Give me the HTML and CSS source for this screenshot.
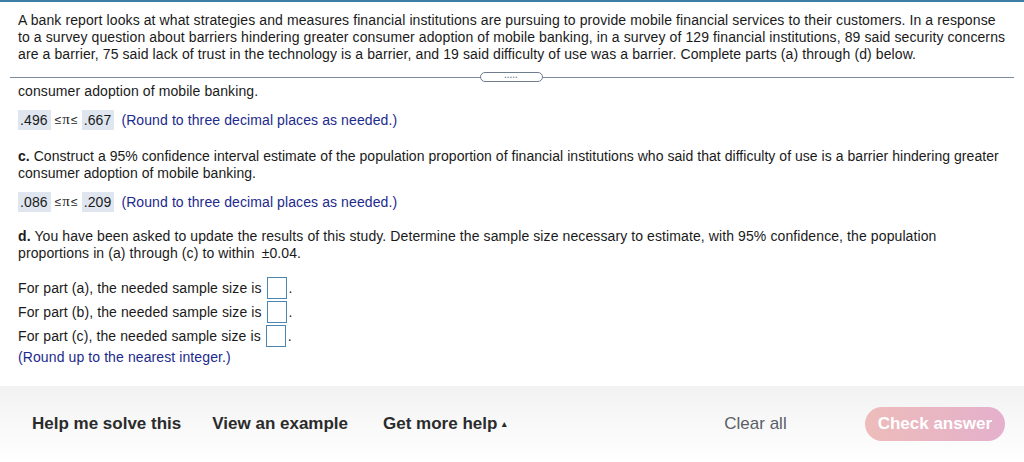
FILE: index.html
```html
<!DOCTYPE html>
<html>
<head>
<meta charset="utf-8">
<link rel="stylesheet" href="styles.css">
</head>
<body>
<div class="topline"></div>
<div class="main">
  <p class="intro">A bank report looks at what strategies and measures financial institutions are pursuing to provide mobile financial services to their customers. In a response to a survey question about barriers hindering greater consumer adoption of mobile banking, in a survey of 129 financial institutions, 89 said security concerns are a barrier, 75 said lack of trust in the technology is a barrier, and 19 said difficulty of use was a barrier. Complete parts (a) through (d) below.</p>
  <div class="divider"><span class="pill">•••••</span></div>
  <div class="content">
    <p class="q first">consumer adoption of mobile banking.</p>
    <p class="ans"><span class="box">.496</span><span class="sym">≤<span class="pi">π</span>≤</span><span class="box">.667</span><span class="note">(Round to three decimal places as needed.)</span></p>
    <p class="q c"><span class="bold">c.</span> Construct a 95% confidence interval estimate of the population proportion of financial institutions who said that difficulty of use is a barrier hindering greater consumer adoption of mobile banking.</p>
    <p class="ans"><span class="box">.086</span><span class="sym">≤<span class="pi">π</span>≤</span><span class="box">.209</span><span class="note">(Round to three decimal places as needed.)</span></p>
    <p class="q d"><span class="bold">d.</span> You have been asked to update the results of this study. Determine the sample size necessary to estimate, with 95% confidence, the population proportions in (a) through (c) to within <span class="pm">±</span>0.04.</p>
    <div class="parts">
      <div class="part">For part (a), the needed sample size is <span class="inp"></span>.</div>
      <div class="part">For part (b), the needed sample size is <span class="inp"></span>.</div>
      <div class="part">For part (c), the needed sample size is <span class="inp"></span>.</div>
      <div class="note2">(Round up to the nearest integer.)</div>
    </div>
  </div>
</div>
<div class="footer">
  <div class="links">
    <span class="link">Help me solve this</span>
    <span class="link">View an example</span>
    <span class="link">Get more help <span class="caret">▴</span></span>
  </div>
  <div class="actions">
    <span class="clear">Clear all</span>
    <span class="check">Check answer</span>
  </div>
</div>
</body>
</html>
```
FILE: styles.css
```css
html, body {
  margin: 0;
  padding: 0;
  background: #fff;
  font-family: "Liberation Sans", Arial, Helvetica, sans-serif;
  color: #1a1a1a;
  width: 1024px;
  height: 462px;
  overflow: hidden;
}
.topline {
  height: 2px;
  background: #3d7ea6;
}
.main {
  padding: 0 10px;
}
.intro {
  margin: 0;
  padding: 10px 8px 0 8px;
  font-size: 14px;
  line-height: 17px;
  letter-spacing: 0.1px;
}
.divider {
  position: relative;
  margin-top: 14px;
  height: 1px;
  background: #7d8a99;
}
.pill {
  position: absolute;
  top: -5px;
  left: 470px;
  width: 63px;
  height: 10px;
  box-sizing: border-box;
  border: 1px solid #6f7d8f;
  border-radius: 6px;
  background: #fff;
  font-size: 5px;
  line-height: 8px;
  letter-spacing: 1px;
  color: #6f7d8f;
  text-align: center;
}
.content {
  padding: 0 8px;
  font-size: 14px;
  line-height: 17px;
  letter-spacing: 0.1px;
}
.q {
  margin: 0;
}
.q.c {
  letter-spacing: 0.04px;
}
.bold {
  font-weight: bold;
}
.q.first {
  margin-top: 5px;
}
.ans {
  margin: 10px 0 0 0;
  display: flex;
  align-items: center;
  height: 20px;
}
.ans + .q {
  margin-top: 18px;
}
.ans + .q.d {
  margin-top: 16px;
}
.box {
  background: #dfe6ef;
  padding: 0 3px 0 2px;
  height: 20px;
  line-height: 20px;
}
.sym {
  margin: 0 4px;
  font-size: 12px;
}
.pi {
  font-family: "Liberation Serif", "Times New Roman", serif;
  font-size: 15px;
  margin: 0 1px;
}
.note {
  color: #1c2a8c;
  margin-left: 7px;
}
.pm {
  margin-left: 3px;
}
.parts {
  margin-top: 14px;
}
.part {
  height: 24px;
  display: flex;
  align-items: center;
}
.inp {
  display: inline-block;
  width: 18px;
  height: 20px;
  border: 1px solid #4a86ad;
  margin-left: 5px;
  margin-right: 2px;
}
.note2 {
  color: #1c2a8c;
  margin-top: 1px;
}
.footer {
  position: absolute;
  left: 0;
  top: 386px;
  width: 1024px;
  height: 76px;
  background: linear-gradient(#f2f2f2, #ffffff);
  display: flex;
  justify-content: space-between;
  align-items: center;
  box-sizing: border-box;
  padding: 0 19px 0 32px;
}
.links {
  display: flex;
  gap: 31px;
}
.link {
  font-weight: bold;
  font-size: 17px;
  color: #2b2b2b;
}
.link + .link + .link {
  margin-left: 4px;
}
.caret {
  font-size: 9px;
  vertical-align: 2px;
}
.actions {
  display: flex;
  align-items: center;
}
.clear {
  font-size: 17px;
  color: #5a5f66;
  margin-right: 78px;
}
.check {
  display: inline-block;
  height: 34px;
  line-height: 34px;
  padding: 0 13px;
  border-radius: 17px;
  background: linear-gradient(90deg, #edbcba, #e4b0cc);
  color: #fff;
  font-weight: bold;
  font-size: 17px;
}
```
